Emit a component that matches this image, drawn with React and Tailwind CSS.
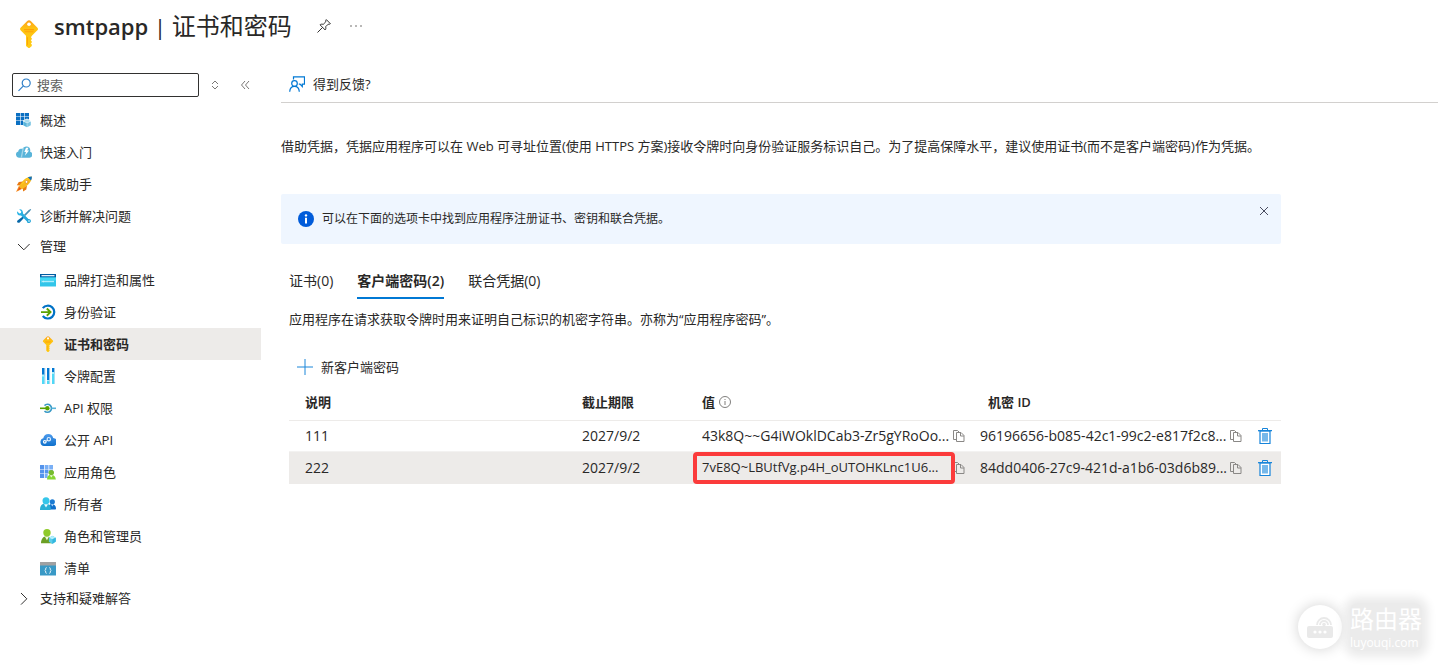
import React from "react";

function KeyIcon({ className }) {
  return (
    <svg viewBox="0 0 18 28" className={className} aria-hidden="true">
      <defs>
        <linearGradient id="keyFill" x1="0" y1="0" x2="0" y2="1">
          <stop offset="0" stopColor="#fea11b" />
          <stop offset="0.3" stopColor="#fec312" />
          <stop offset="1" stopColor="#ffcb12" />
        </linearGradient>
      </defs>
      <path
        d="M17.2 7.6 11 1.3a2.8 2.8 0 0 0-4 0L.8 7.6a2 2 0 0 0 0 2.9L6 15.7V26l2.2 1.8a1.3 1.3 0 0 0 1.6 0l2-1.9v-1.4l-1-1 1-1.1v-1l-1-1.1 1-1.1v-1l-.9-1 1.2-1.6 5-5a2 2 0 0 0 .1-3Z"
        fill="url(#keyFill)"
      />
      <circle cx="9" cy="4.2" r="1.8" fill="#fff" />
      <path d="M7.1 17.2h.9v8.4l-.9-.8Z" fill="#ff9300" opacity="0.75" />
      <path d="M4 9h10v1.2H4zM4.6 11.2h8.8v1H4.6z" fill="#ff9300" opacity="0.7" />
    </svg>
  );
}

const icon = "block h-4 w-4 shrink-0";

function OverviewIcon() {
  return (
    <svg viewBox="0 0 16 16" className={icon} aria-hidden="true">
      <path d="M0 1h4v3H0zM4.6 1h3.8v3H4.6zM9 1h4v3H9zM0 4.6h4v3.8H0zM4.6 4.6h3.8v3.8H4.6zM9 4.6h4v3.8H9zM0 9h4v4H0zM4.6 9h3.8v4H4.6z" fill="#0a6fc2" />
      <path d="m11 6.6 4 2v4.6l-4 2.3-4-2.3V8.6Z" fill="#fff" />
      <path d="m11 7.3 3.6 1.7L11 10.8 7.3 9Z" fill="#a9dcee" />
      <path d="M7.2 9.4 10.8 11v4.2l-3.6-2Z" fill="#59b4d9" />
      <path d="M14.8 9.4 11.2 11v4.2l3.6-2Z" fill="#7ac5e2" />
    </svg>
  );
}

function QuickstartIcon() {
  return (
    <svg viewBox="0 0 16 16" className={icon} aria-hidden="true">
      <path d="M3.200 13.700a3.100 3.100 0 0 1-.9-6.100c0-1.500 1-2.700 2.700-2.800.6 0 1 .1 1.400.3C7.200 3.400 8.600 2.500 10.300 2.500a4 4 0 0 1 4 3.900c0 .6-.1 1-.2 1.400a3 3 0 0 1-.9 5.900Z" fill="#59b4d9" />
      <path d="M6.400 5.100 4.600 13.700H6l2-10.400c-.7.400-1.300 1-1.600 1.800Z" fill="#a3d6ea" />
      <path d="M10 3.800h2.400l-1.200 2.700h1.900l-4.300 5.200 1.200-3.700H8.300Z" fill="#fff" />
    </svg>
  );
}

function RocketIcon() {
  return (
    <svg viewBox="0 0 16 16" className={icon} aria-hidden="true">
      <path d="M7 5.500 2.800 6 .8 9.200l3.600.2ZM11 9.400l-.7 4-3.200 2.100-.3-3.800Z" fill="#e87a12" />
      <path d="M3 9.700 0 16l6.400-3.200Z" fill="#f78d1e" />
      <path d="M3.500 11.200 1.500 14.800 5 12.800Z" fill="#e0501b" />
      <path d="M15.800.5C11.500.8 7.600 2.500 3.200 10.200l2.900 3C13.800 8.500 15.600 4.800 15.800.5Z" fill="#f9b81b" />
      <path d="m15.200 1.100-12 9.100L10 3.300Z" fill="#fdd31d" />
      <path d="M15.900.4c-1.600.1-2.900.3-4.100.9L15 4.600c.6-1.300.9-2.600.9-4.200Z" fill="#1272be" />
      <circle cx="10.500" cy="5.900" r="1.400" fill="#fff" stroke="#df7d16" strokeWidth="0.700" />
    </svg>
  );
}

function ToolsIcon() {
  return (
    <svg viewBox="0 0 16 16" className={icon} aria-hidden="true">
      <defs>
        <linearGradient id="wrench" x1="0" y1="0" x2="1" y2="1">
          <stop offset="0" stopColor="#2ab7e9" />
          <stop offset="1" stopColor="#21a2d6" />
        </linearGradient>
      </defs>
      <path d="m14.700 1 .5.500-1.300 1.800L9.200 8 8 6.800l4.700-4.700Z" fill="#4a91b5" />
      <path d="m7.100 8.300 1.300 1.300-4.700 4.800c-.8.700-2.400.5-2.600-.4-.2-.6 0-1 .4-1.400Z" fill="#0868a8" />
      <path d="M3.200 1.300 5.300 3.400 4.900 5 3.300 5.400 1.200 3.300C.6 5.500 1.700 7.600 4.300 7.600L5 7.500l6 6 .2.900c1 1.300 3.600.7 3.700-1.100.1-1.500-1-2.400-2.500-2.200L7 5.500C7.300 3 5.600.8 3.200 1.300Z" fill="url(#wrench)" />
      <circle cx="13" cy="13" r=".8" fill="#fff" />
    </svg>
  );
}

function BrandingIcon() {
  return (
    <svg viewBox="0 0 16 16" className={icon} aria-hidden="true">
      <path d="M0 2h16v12.500H0z" fill="#32c5e9" />
      <path d="M0 2h16v3.500H0z" fill="#005ba1" />
      <path d="M1.500 3h13v1.300h-13z" fill="#e5f4ff" />
      <path d="M0 5.500h16v3H0z" fill="#40d8f5" />
      <path d="M2 10.500v-2m1.500 2v-2m1.500 2v-2m2 0v2m2-2v2m2-2v2m2-2v2M2 9.500h12" stroke="#cff7ff" strokeWidth=".7" />
    </svg>
  );
}

function AuthIcon() {
  return (
    <svg viewBox="0 0 16 16" className={icon} aria-hidden="true">
      <path d="M2.800 4.200A6.400 6.400 0 1 1 2.800 12" fill="none" stroke="#0072c6" strokeWidth="2.200" />
      <path d="M1 8.100h9M6.800 4.500l3.700 3.600-3.700 3.600" fill="none" stroke="#5ba300" strokeWidth="1.900" />
    </svg>
  );
}

function TokenIcon() {
  return (
    <svg viewBox="0 0 16 16" className={icon} aria-hidden="true">
      <path d="M2 0h2.600v8H2zM7 0h2.400v12H7zM12 0h2.400v5H12z" fill="#0078d4" />
      <path d="M2 7h2.600v9H2zM7 12.500h2.400V16H7zM12 4.500h2.400V16H12z" fill="#50d9f7" />
      <path d="M2 6.500h2.600v2H2zM12 4h2.400v2H12z" fill="#a7effc" />
      <path d="M4.600 0h.7v16h-.7zM9.400 0h.7v16h-.7zM14 0h.5v16H14z" fill="#9cc9e8" />
    </svg>
  );
}

function PermissionIcon() {
  return (
    <svg viewBox="0 0 16 16" className={icon} aria-hidden="true">
      <path d="M4.500 5.600A4 4 0 1 1 4.500 11" fill="none" stroke="#3999c6" strokeWidth="1.600" />
      <path d="M11.500 8.300H16" stroke="#59b4d9" strokeWidth="1.600" />
      <path d="M0 8.300h7" stroke="#57a300" strokeWidth="1.600" />
      <circle cx="7.400" cy="8.300" r="2.200" fill="#57a300" />
    </svg>
  );
}

function ExposeIcon() {
  return (
    <svg viewBox="0 0 16 16" className={icon} aria-hidden="true">
      <defs>
        <linearGradient id="apiCloud" x1="0" y1="0" x2="0" y2="1">
          <stop offset="0" stopColor="#4d9bed" />
          <stop offset="1" stopColor="#0f70cb" />
        </linearGradient>
      </defs>
      <path d="M4 14a4 4 0 0 1-.7-7.800C3.700 3.600 5.900 2 8.300 2c2.500 0 4.300 1.500 4.900 3.900A4 4 0 0 1 12.400 14Z" fill="url(#apiCloud)" />
      <circle cx="4.800" cy="9.800" r="1.300" fill="none" stroke="#fff" strokeWidth="1.200" />
      <circle cx="8.800" cy="7.200" r="1.700" fill="none" stroke="#e0efff" strokeWidth="1.200" />
      <path d="m7.200 8.300-1 .8" stroke="#fff" />
    </svg>
  );
}

function RolesIcon() {
  return (
    <svg viewBox="0 0 16 16" className={icon} aria-hidden="true">
      <path d="M0 1h4v4H0zM0 5.600h4v3.800H0zM0 10h4v4H0zM4.700 5.600h3.800v3.800H4.700z" fill="#5493ec" />
      <path d="M4.700 1h3.800v4H4.700zM9.200 1H13v4H9.200zM4.700 10h3v4h-3zM9.200 5.600H13v3H9.200z" fill="#79aff5" />
      <path d="M7 15.500c0-2.800 1.300-4.700 4-4.700s4.600 1.900 4.900 4.700Z" fill="#86d633" />
      <circle cx="11.300" cy="8.600" r="2.700" fill="#76bc2d" />
      <path d="m9.800 11.200 1.500 2.400 1.600-2.400Z" fill="#ecfbd8" />
    </svg>
  );
}

function OwnersIcon() {
  return (
    <svg viewBox="0 0 16 16" className={icon} aria-hidden="true">
      <path d="M8 13.500c.2-3.500 1.200-5.500 4-5.500 2.600 0 4 2.200 4 4.500 0 .7-.4 1-1 1Z" fill="#0f6fcb" />
      <circle cx="12.300" cy="5.800" r="2.600" fill="#1b7bd2" />
      <path d="m11 8.300 1.300 2.200L13.600 8.300Z" fill="#b8dfff" />
      <path d="M0 14c0-4 1.600-6.500 5.400-6.500 3.800 0 5.400 2.500 5.400 5.200 0 .9-.4 1.300-1 1.300Z" fill="#29afd5" />
      <circle cx="6" cy="4.800" r="3.500" fill="#35c6ea" />
      <path d="m4 8.200 2 3.400 2-3.400Z" fill="#e7fbff" />
    </svg>
  );
}

function AdminsIcon() {
  return (
    <svg viewBox="0 0 16 16" className={icon} aria-hidden="true">
      <path d="M1 15.200c0-4.200 2.100-7 5.700-7s5.300 2.800 5.400 7Z" fill="#6b9f24" />
      <circle cx="7" cy="4.800" r="3.700" fill="#8fca2a" />
      <path d="m4.900 8.700 2 3.500 2-3.500Z" fill="#f0fbdc" />
      <path d="m12.400 7.800 3.500 1.900v4L12.400 16l-3.500-2.300v-4Z" fill="#5bcdec" />
      <path d="m12.400 8 3.300 1.700-3.300 1.600-3.300-1.600Z" fill="#b5f0fc" />
      <path d="M12.400 11.300v4.500l3.300-2.200V9.700Z" fill="#34b7de" />
    </svg>
  );
}

function ManifestIcon() {
  return (
    <svg viewBox="0 0 16 16" className={icon} aria-hidden="true">
      <path d="M0 2h16v13.500H0z" fill="#3999c6" />
      <path d="M0 2h16v3.500H0z" fill="#a0a1a2" />
      <path d="M6.500 7.500c-1.300 0-.2 2.500-1.600 3 1.400.4.300 3 1.600 3M9.500 7.500c1.300 0 .2 2.500 1.600 3-1.400.4-.3 3-1.600 3" fill="none" stroke="#fff" strokeWidth=".9" />
    </svg>
  );
}

function SidebarKeyIcon() {
  return (
    <span className="flex h-4 w-4 shrink-0 justify-center">
      <KeyIcon className="h-4 w-3" />
    </span>
  );
}

function CopyIcon() {
  return (
    <svg viewBox="0 0 12 14" className="block h-3.5 w-3 shrink-0" fill="none" stroke="#8a8886" aria-hidden="true">
      <path d="M3.500 10.500H.5V1.500h4l1.500 1.500" />
      <path d="M3.500 3.500h4.500l3 3V12.500H3.500Z" />
      <path d="M7.500 3.500V7H11" />
    </svg>
  );
}

function TrashIcon() {
  return (
    <svg viewBox="0 0 14 16" className="block h-4 w-3.5" aria-hidden="true">
      <path d="M2 3h10v12.500H2z" fill="#fff" stroke="#1684da" strokeWidth="1.200" />
      <path d="M4 5h6v8.500H4z" fill="#76b8ea" />
      <path d="M0 2.700h14" stroke="#1684da" strokeWidth="1.300" />
      <path d="M4.500 2.500v-2h5v2" fill="none" stroke="#1684da" />
    </svg>
  );
}

const topItems = [
  ["概述", OverviewIcon],
  ["快速入门", QuickstartIcon],
  ["集成助手", RocketIcon],
  ["诊断并解决问题", ToolsIcon],
];

const manageItems = [
  ["品牌打造和属性", BrandingIcon],
  ["身份验证", AuthIcon],
  ["证书和密码", SidebarKeyIcon],
  ["令牌配置", TokenIcon],
  ["API 权限", PermissionIcon],
  ["公开 API", ExposeIcon],
  ["应用角色", RolesIcon],
  ["所有者", OwnersIcon],
  ["角色和管理员", AdminsIcon],
  ["清单", ManifestIcon],
];

const secrets = [
  { name: "111", expires: "2027/9/2", value: "43k8Q~~G4iWOklDCab3-Zr5gYRoOo...", id: "96196656-b085-42c1-99c2-e817f2c8..." },
  { name: "222", expires: "2027/9/2", value: "7vE8Q~LBUtfVg.p4H_oUTOHKLnc1U6...", id: "84dd0406-27c9-421d-a1b6-03d6b89...", marked: true },
];

function Header() {
  return (
    <header className="flex h-[66px] items-start gap-3 pl-5 pt-2">
      <KeyIcon className="mt-3 h-7 w-[18px] shrink-0" />
      <h1 className="ml-1 whitespace-nowrap text-[22px] leading-9">
        <span className="font-semibold">smtpapp</span> | <span className="text-2xl leading-9">证书和密码</span>
      </h1>
      <button type="button" aria-label="固定" className="ml-3 mt-2.5 flex h-4 w-4 items-center justify-center">
        <svg viewBox="0 0 16 16" className="h-4 w-4" fill="none" stroke="#323130" strokeWidth="1" aria-hidden="true">
          <path d="M10.300 1.600 14.400 5.700 13.200 6.300 12.200 6.200 9.600 8.800C10.100 10.300 9.800 11.300 9.200 12L4 6.800C4.700 6.200 5.700 5.900 7.200 6.400L9.800 3.800 9.700 2.800ZM6.600 9.400 1.500 14.500" />
        </svg>
      </button>
      <button type="button" aria-label="更多" className="ml-1 mt-2.5 flex h-4 w-4 items-center justify-center">
        <svg viewBox="0 0 12 2" className="h-0.5 w-3" fill="#605e5c" aria-hidden="true">
          <circle cx="1" cy="1" r=".8" />
          <circle cx="6" cy="1" r=".8" />
          <circle cx="11" cy="1" r=".8" />
        </svg>
      </button>
    </header>
  );
}

function NavItem({ label, Icon, nested, active }) {
  return (
    <li>
      <a
        href="#"
        aria-current={active ? "page" : undefined}
        className={`flex h-8 items-center gap-2 ${nested ? "pl-10" : "pl-4"} ${active ? "bg-[#edebe9] font-semibold" : ""}`}
      >
        <Icon />
        {label}
      </a>
    </li>
  );
}

function Sidebar() {
  return (
    <aside className="w-[261px] shrink-0 pt-1.5">
      <div className="flex h-[26px] items-center pl-3">
        <label htmlFor="menu-search" className="flex h-6 w-[187px] items-center gap-1 rounded-xs border border-[#323130] px-1">
          <svg viewBox="0 0 16 16" className="h-4 w-4 shrink-0" fill="none" stroke="#2f7fc8" strokeWidth="1.200" aria-hidden="true">
            <circle cx="9.200" cy="6" r="4" />
            <path d="M6.400 8.900 1.500 13.800" />
          </svg>
          <input id="menu-search" type="search" aria-label="搜索" placeholder="搜索" className="h-5 w-full min-w-0 bg-transparent outline-none placeholder:text-[#605e5c]" />
        </label>
        <button type="button" aria-label="展开或折叠" className="ml-2 flex h-4 w-4 items-center justify-center">
          <svg viewBox="0 0 8 10" className="h-2.5 w-2" fill="none" stroke="#797775" aria-hidden="true">
            <path d="M1 4 4 1l3 3M1 6l3 3 3-3" />
          </svg>
        </button>
        <button type="button" aria-label="隐藏菜单" className="ml-3.5 flex h-4 w-4 items-center justify-center">
          <svg viewBox="0 0 10 10" className="h-2.5 w-2.5" fill="none" stroke="#797775" aria-hidden="true">
            <path d="M5 1 1.500 5 5 9M9 1 5.500 5 9 9" />
          </svg>
        </button>
      </div>
      <nav className="mt-1.5" aria-label="菜单">
        <ul>
          {topItems.map(([label, Icon]) => (
            <NavItem key={label} label={label} Icon={Icon} />
          ))}
        </ul>
        <button type="button" aria-expanded="true" className="flex h-7 w-full items-center gap-2 pl-4">
          <svg viewBox="0 0 16 16" className={icon} fill="none" stroke="#323130" aria-hidden="true">
            <path d="m2 6 5.800 5.800L13.600 6" />
          </svg>
          管理
        </button>
        <ul className="mt-1">
          {manageItems.map(([label, Icon]) => (
            <NavItem key={label} label={label} Icon={Icon} nested active={label === "证书和密码"} />
          ))}
        </ul>
        <button type="button" aria-expanded="false" className="flex h-7 w-full items-center gap-2 pl-4">
          <svg viewBox="0 0 16 16" className={icon} fill="none" stroke="#323130" aria-hidden="true">
            <path d="m5 3 5.800 5.800L5 14.600" />
          </svg>
          支持和疑难解答
        </button>
      </nav>
    </aside>
  );
}

function SecretsTable() {
  return (
    <table className="w-full table-fixed border-collapse text-left">
      <colgroup>
        <col />
        <col className="w-[120px]" />
        <col className="w-[278px]" />
        <col className="w-[277px]" />
        <col className="w-8" />
      </colgroup>
      <thead>
        <tr className="h-9 border-b border-[#edebe9]">
          <th className="pl-4 font-semibold">说明</th>
          <th className="pl-2 font-semibold">截止期限</th>
          <th className="pl-2 font-semibold">
            <span className="flex items-center gap-1">
              值
              <svg viewBox="0 0 12 12" className="h-3 w-3" fill="none" stroke="#605e5c" strokeWidth=".8" aria-hidden="true">
                <circle cx="6" cy="6" r="5.500" />
                <path d="M6 5v4M6 3v1" />
              </svg>
            </span>
          </th>
          <th className="pl-4 font-semibold">机密 ID</th>
          <th aria-label="操作" />
        </tr>
      </thead>
      <tbody className="text-sm">
        {secrets.map((s) => (
          <tr key={s.name} className={s.marked ? "h-8 bg-[#edebe9]" : "h-[31px] border-b border-[#f3f2f1]"}>
            <td className="pl-4">{s.name}</td>
            <td className="pl-2">{s.expires}</td>
            <td>
              <div className={`relative flex items-center justify-between pl-2 pr-[7px] ${s.marked ? "h-8 text-[13px]" : ""}`}>
                <span className="whitespace-nowrap">{s.value}</span>
                <button type="button" aria-label="复制值"><CopyIcon /></button>
                {s.marked && <span className="absolute inset-y-0 -left-px right-[17px] rounded-sm border-4 border-[#fb3b3b]" />}
              </div>
            </td>
            <td>
              <div className="flex items-center justify-between pl-2 pr-[7px]">
                <span className="whitespace-nowrap">{s.id}</span>
                <button type="button" aria-label="复制机密 ID"><CopyIcon /></button>
              </div>
            </td>
            <td>
              <button type="button" aria-label="删除" className="mx-auto flex"><TrashIcon /></button>
            </td>
          </tr>
        ))}
      </tbody>
    </table>
  );
}

function Main() {
  return (
    <main className="min-w-0 flex-1 pl-5">
      <div className="flex h-[37px] items-center border-b border-[#d2d0ce] pl-2">
        <button type="button" className="flex items-center gap-2">
          <svg viewBox="0 0 16 16" className={icon} fill="none" stroke="#0078d4" strokeWidth="1.200" aria-hidden="true">
            <path d="M4.500 3.500V.8h11v7.400h-2.200v2.300L11 8.200H9.800" />
            <circle cx="5.500" cy="7.500" r="2.800" />
            <path d="M.7 15.700c.2-3.300 2-5.300 4.800-5.300s4.600 2 4.800 5.300" />
          </svg>
          得到反馈?
        </button>
      </div>
      <p className="pt-[33px]">
        借助凭据，凭据应用程序可以在 Web 可寻址位置(使用 HTTPS 方案)接收令牌时向身份验证服务标识自己。为了提高保障水平，建议使用证书(而不是客户端密码)作为凭据。
      </p>
      <div className="max-w-[1000px]">
        <div role="status" className="mt-[38px] flex h-[50px] items-center gap-2 rounded-xs bg-[#eff6ff] pl-[17px] pr-3 text-xs">
          <svg viewBox="0 0 16 16" className={icon} aria-hidden="true">
            <circle cx="8" cy="8" r="8" fill="#015cda" />
            <path d="M7 6.800h2v5.700H7z" fill="#fff" />
            <circle cx="8" cy="4.400" r="1.200" fill="#fff" />
          </svg>
          <span className="flex-1 leading-5">可以在下面的选项卡中找到应用程序注册证书、密钥和联合凭据。</span>
          <button type="button" aria-label="关闭" className="mt-3 flex h-2.5 w-2.5 self-start">
            <svg viewBox="0 0 10 10" className="h-2.5 w-2.5" stroke="#494c60" aria-hidden="true">
              <path d="m1 1 8 8M9 1 1 9" />
            </svg>
          </button>
        </div>
        <div className="pl-2">
          <div role="tablist" className="mt-5 flex gap-6 text-sm">
            <button type="button" role="tab" aria-selected="false" className="h-[35px] border-b-2 border-transparent">证书(0)</button>
            <button type="button" role="tab" aria-selected="true" className="h-[35px] border-b-2 border-[#0078d4] font-semibold">客户端密码(2)</button>
            <button type="button" role="tab" aria-selected="false" className="h-[35px] border-b-2 border-transparent">联合凭据(0)</button>
          </div>
          <p className="mt-2.5">应用程序在请求获取令牌时用来证明自己标识的机密字符串。亦称为“应用程序密码”。</p>
          <button type="button" className="mb-[7px] mt-7 flex items-center gap-2 pl-2">
            <svg viewBox="0 0 16 16" className={icon} stroke="#1a86d9" aria-hidden="true">
              <path d="M8 0v16M0 8h16" />
            </svg>
            新客户端密码
          </button>
          <SecretsTable />
        </div>
      </div>
    </main>
  );
}

function Watermark() {
  return (
    <div className="pointer-events-none absolute bottom-4 right-4 flex items-center gap-2 text-white">
      <span className="flex h-11 w-11 items-center justify-center rounded-full bg-white shadow-[0_0_14px_rgba(0,0,0,0.18)]">
        <svg viewBox="0 0 28 26" className="h-[26px] w-7" aria-hidden="true">
          <rect x="1" y="12" width="26" height="12" rx="2" fill="#e9e9e9" />
          <path d="M11 11a7 7 0 1 1 14 0M14 11a4 4 0 1 1 8 0" fill="none" stroke="#e9e9e9" strokeWidth="1.800" />
          <circle cx="18" cy="10.500" r="1.800" fill="#e9e9e9" />
          <circle cx="9" cy="18" r="1.600" fill="#fff" />
          <circle cx="14" cy="18" r="1.600" fill="#fff" />
          <circle cx="19" cy="18" r="1.600" fill="#fff" />
        </svg>
      </span>
      <span className="flex flex-col rounded-lg bg-[#ebebeb] shadow-[0_0_10px_6px_#ebebeb]">
        <span className="text-2xl leading-8">路由器</span>
        <span className="text-xs leading-4">luyouqi.com</span>
      </span>
    </div>
  );
}

export default function App() {
  return (
    <div
      lang="zh-CN"
      className="relative min-h-screen overflow-hidden bg-white font-['Open_Sans','Noto_Sans_CJK_SC',sans-serif] text-[13px] leading-5 text-[#292827]"
    >
      <Header />
      <div className="flex">
        <Sidebar />
        <Main />
      </div>
      <Watermark />
    </div>
  );
}
